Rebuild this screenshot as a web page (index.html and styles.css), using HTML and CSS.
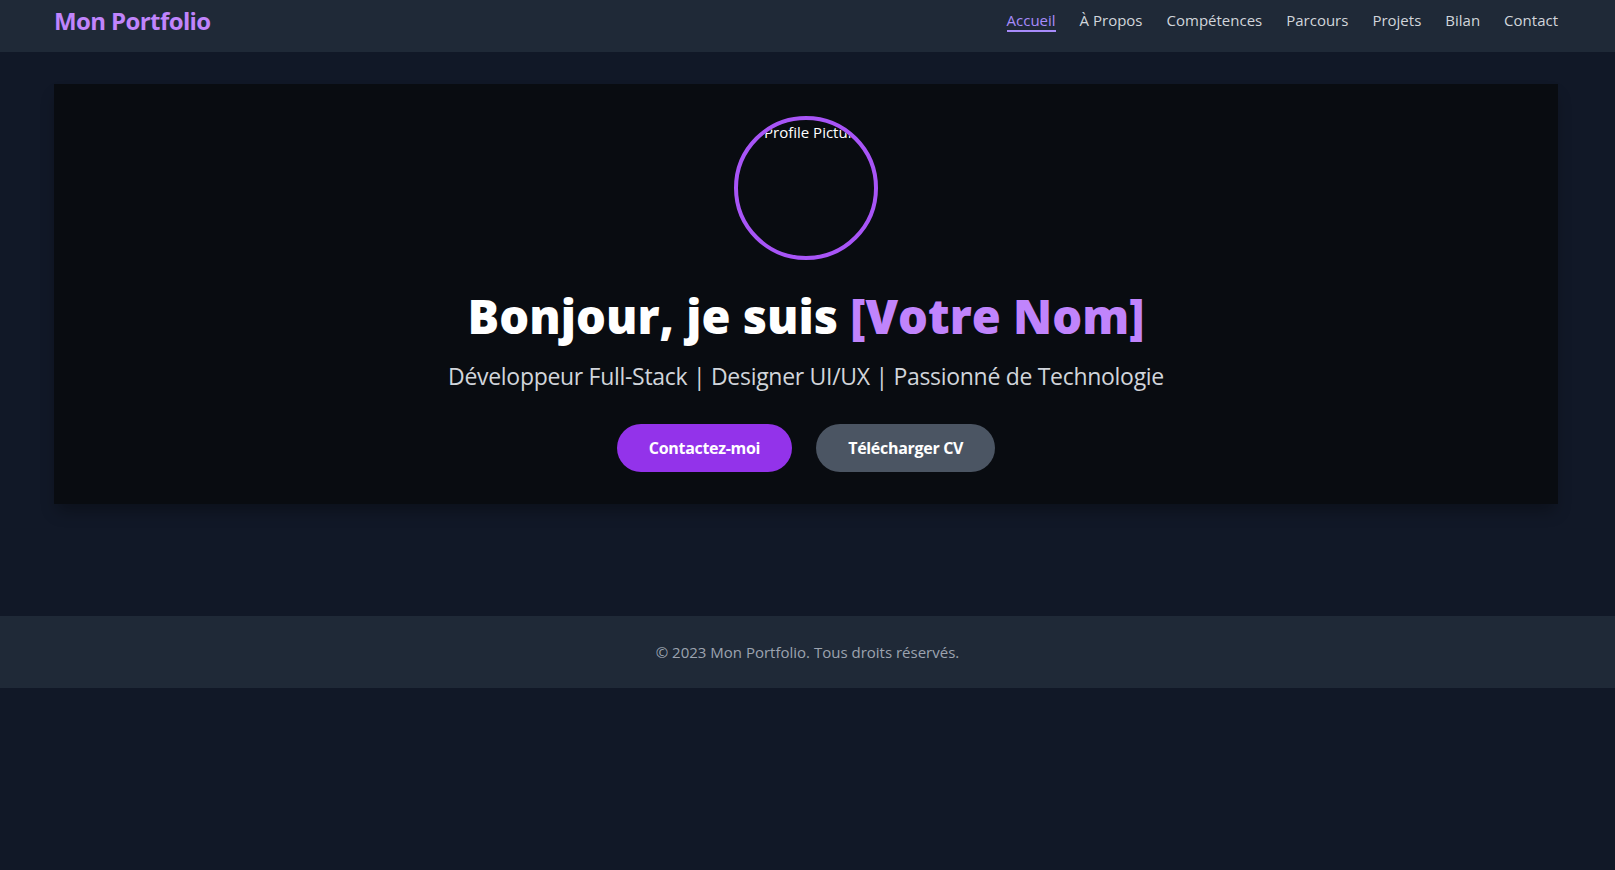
FILE: index.html
```html
<!DOCTYPE html>
<html lang="fr">
<head>
<meta charset="utf-8">
<title>Mon Portfolio</title>
<link rel="stylesheet" href="styles.css">
</head>
<body>
<header class="site-header">
  <div class="container header-row">
    <a class="logo" href="#">Mon Portfolio</a>
    <nav class="nav">
      <a class="nav-link active" href="#">Accueil</a>
      <a class="nav-link" href="#">À Propos</a>
      <a class="nav-link" href="#">Compétences</a>
      <a class="nav-link" href="#">Parcours</a>
      <a class="nav-link" href="#">Projets</a>
      <a class="nav-link" href="#">Bilan</a>
      <a class="nav-link" href="#">Contact</a>
    </nav>
  </div>
</header>
<main class="main">
  <div class="container">
    <section class="hero">
      <div class="avatar"><span class="avatar-alt">Profile Picture</span></div>
      <h1 class="hero-title">Bonjour, je suis <span class="accent">[Votre Nom]</span></h1>
      <p class="hero-sub">Développeur Full-Stack | Designer UI/UX | Passionné de Technologie</p>
      <div class="hero-actions">
        <a class="btn btn-primary" href="#">Contactez-moi</a>
        <a class="btn btn-secondary" href="#">Télécharger CV</a>
      </div>
    </section>
  </div>
</main>
<footer class="site-footer">
  <p class="footer-text">© 2023 Mon Portfolio. Tous droits réservés.</p>
</footer>
</body>
</html>
```
FILE: styles.css
```css
* { box-sizing: border-box; }
html, body { margin: 0; padding: 0; }
body {
  background: #111827;
  color: #fff;
  font-family: "Open Sans", "Noto Sans", sans-serif;
  min-height: 870px;
}
a { text-decoration: none; color: inherit; }
.container {
  max-width: 1539px;
  margin: 0 auto;
  padding: 0 19px 0 16px;
}
.site-header {
  background: #1f2937;
  height: 52px;
  padding-top: 5px;
}
.header-row {
  display: flex;
  justify-content: space-between;
  align-items: center;
  height: 32px;
}
.logo {
  font-size: 24px;
  line-height: 32px;
  font-weight: 700;
  color: #c084fc;
  letter-spacing: -0.6px;
}
.nav {
  display: flex;
  gap: 24px;
}
.nav-link {
  font-size: 15px;
  line-height: 20px;
  color: #d1d5db;
  border-bottom: 2px solid transparent;
}
.nav-link.active {
  color: #a78bfa;
  border-bottom-color: #a78bfa;
}
.main {
  padding: 32px 0 112px;
}
.hero {
  background: #090c11;
  padding: 32px;
  display: flex;
  flex-direction: column;
  align-items: center;
  box-shadow: 0 10px 15px -3px rgba(0,0,0,0.3);
}
.avatar {
  width: 144px;
  height: 144px;
  border-radius: 50%;
  border: 4px solid #a855f7;
  overflow: hidden;
  margin-bottom: 32px;
}
.avatar-alt {
  display: block;
  padding-left: 26px;
  font-size: 15px;
  line-height: 24px;
  white-space: nowrap;
  color: #fff;
}
.hero-title {
  margin: 0 0 20px;
  font-size: 47px;
  line-height: 48px;
  font-weight: 800;
}
.accent { color: #c084fc; }
.hero-sub {
  margin: 0 0 32px;
  font-size: 23px;
  line-height: 32px;
  color: #d1d5db;
  letter-spacing: -0.3px;
}
.hero-actions {
  display: flex;
  gap: 24px;
}
.btn {
  display: block;
  padding: 12px 32px;
  border-radius: 9999px;
  font-size: 16px;
  line-height: 24px;
  font-weight: 700;
  color: #fff;
  letter-spacing: -0.3px;
}
.btn-primary { background: #9333ea; }
.btn-secondary { background: #4b5563; }
.site-footer {
  background: #1f2937;
  padding: 24px 0;
  text-align: center;
}
.footer-text {
  margin: 0;
  font-size: 15px;
  line-height: 24px;
  color: #9ca3af;
}
```
